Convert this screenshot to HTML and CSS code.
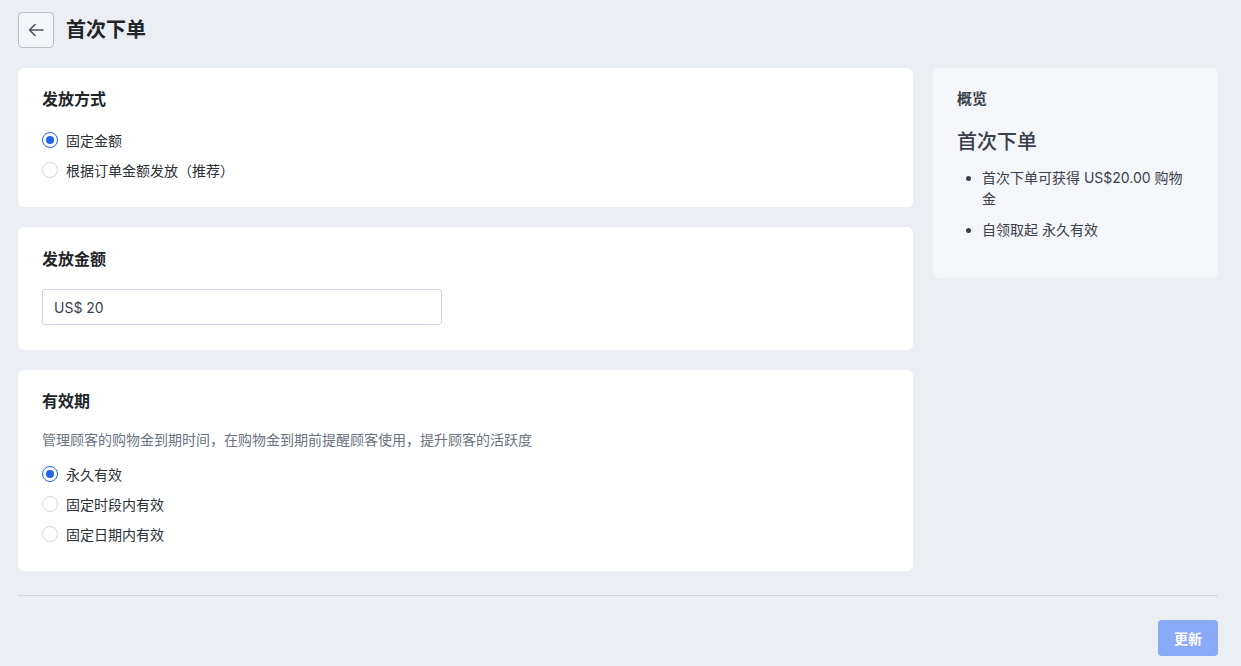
FILE: index.html
```html
<!DOCTYPE html>
<html lang="zh-CN">
<head>
<meta charset="utf-8">
<title>首次下单</title>
<link rel="stylesheet" href="styles.css">
</head>
<body>
<div class="page">
  <header class="header">
    <button class="back" type="button" aria-label="返回">
      <svg width="18" height="18" viewBox="0 0 18 18" fill="none" stroke="#4b5160" stroke-width="1.6" stroke-linecap="round" stroke-linejoin="round"><path d="M16 9H2.5M8 3.5L2.5 9 8 14.5"/></svg>
    </button>
    <h1 class="title">首次下单</h1>
  </header>

  <div class="layout">
    <div class="main">
      <section class="card">
        <h2 class="card-title">发放方式</h2>
        <div class="radios">
          <label class="radio"><span class="dot checked"></span>固定金额</label>
          <label class="radio"><span class="dot"></span>根据订单金额发放（推荐）</label>
        </div>
      </section>

      <section class="card card-amount">
        <h2 class="card-title">发放金额</h2>
        <div class="input">US$ 20</div>
      </section>

      <section class="card">
        <h2 class="card-title">有效期</h2>
        <p class="desc">管理顾客的购物金到期时间，在购物金到期前提醒顾客使用，提升顾客的活跃度</p>
        <div class="radios">
          <label class="radio"><span class="dot checked"></span>永久有效</label>
          <label class="radio"><span class="dot"></span>固定时段内有效</label>
          <label class="radio"><span class="dot"></span>固定日期内有效</label>
        </div>
      </section>
    </div>

    <aside class="side">
      <div class="side-card">
        <h3 class="side-label">概览</h3>
        <div class="side-title">首次下单</div>
        <ul class="side-list">
          <li>首次下单可获得 US$20.00 购物金</li>
          <li>自领取起 永久有效</li>
        </ul>
      </div>
    </aside>
  </div>

  <div class="divider"></div>
  <div class="footer">
    <button class="btn" type="button">更新</button>
  </div>
</div>
</body>
</html>
```

FILE: styles.css
```css
* { box-sizing: border-box; }
html, body { margin: 0; padding: 0; }
body {
  background: #ebeef2;
  font-family: Inter, "Noto Sans CJK SC", sans-serif;
  color: #212529;
  font-size: 14px;
}
.page {
  width: 1200px;
  margin-left: 18px;
  padding: 12px 0 10px;
}
.header {
  display: flex;
  align-items: center;
  gap: 12px;
  height: 36px;
}
.back {
  width: 36px;
  height: 36px;
  border: 1px solid #b9bec9;
  border-radius: 4px;
  background: #f4f5f8;
  display: flex;
  align-items: center;
  justify-content: center;
  padding: 0;
}
.title {
  margin: 0;
  font-size: 20px;
  font-weight: 700;
  line-height: 28px;
  color: #212529;
}
.layout {
  margin-top: 20px;
  display: grid;
  grid-template-columns: 895px 285px;
  gap: 20px;
  align-items: start;
}
.main {
  display: flex;
  flex-direction: column;
  gap: 20px;
}
.card {
  background: #fff;
  border-radius: 6px;
  padding: 19px 24px 22px;
}
.card-title {
  margin: 0;
  font-size: 16px;
  font-weight: 700;
  line-height: 24px;
  color: #212529;
}
.radios {
  display: flex;
  flex-direction: column;
}
.card-title + .radios { margin-top: 14px; }
.radio {
  display: flex;
  align-items: center;
  height: 30px;
  gap: 8px;
  color: #2b2f36;
  font-size: 14px;
}
.dot {
  width: 16px;
  height: 16px;
  border-radius: 50%;
  border: 1px solid #d3d7df;
  background: #fff;
  flex: none;
  position: relative;
}
.dot.checked {
  border: 1.5px solid #2363eb;
}
.dot.checked::after {
  content: "";
  position: absolute;
  left: 50%;
  top: 50%;
  width: 8px;
  height: 8px;
  margin: -4px 0 0 -4px;
  border-radius: 50%;
  background: #2363eb;
}
.input {
  margin-top: 18px;
  width: 400px;
  height: 36px;
  border: 1px solid #cfd4de;
  border-radius: 3px;
  padding: 0 11px;
  display: flex;
  align-items: center;
  color: #3c4250;
  font-size: 14px;
}
.card-amount { padding-bottom: 25px; padding-top: 20px; }
.desc {
  margin: 16px 0 8px;
  line-height: 22px;
  color: #6b7280;
  font-size: 14px;
}
.side-card {
  background: #f5f6fa;
  border-radius: 6px;
  padding: 20px 24px 38px;
}
.side-label {
  margin: 0;
  font-size: 15px;
  font-weight: 700;
  line-height: 22px;
  color: #3a3f4a;
}
.side-title {
  margin-top: 18px;
  font-size: 20px;
  line-height: 28px;
  font-weight: 500;
  color: #3a3f4a;
}
.side-list {
  margin: 11px 0 0;
  padding-left: 25px;
  color: #3a3f4a;
  font-size: 14px;
  line-height: 21px;
}
.side-list li + li { margin-top: 10px; }
.divider {
  margin-top: 24px;
  height: 1px;
  background: #d3d6df;
}
.footer {
  display: flex;
  justify-content: flex-end;
  margin-top: 24px;
}
.btn {
  width: 60px;
  height: 36px;
  border: none;
  border-radius: 4px;
  background: #8aa9f7;
  color: #fff;
  font-family: Inter, "Noto Sans CJK SC", sans-serif;
  font-size: 14px;
  font-weight: 700;
  padding: 0;
}
```
